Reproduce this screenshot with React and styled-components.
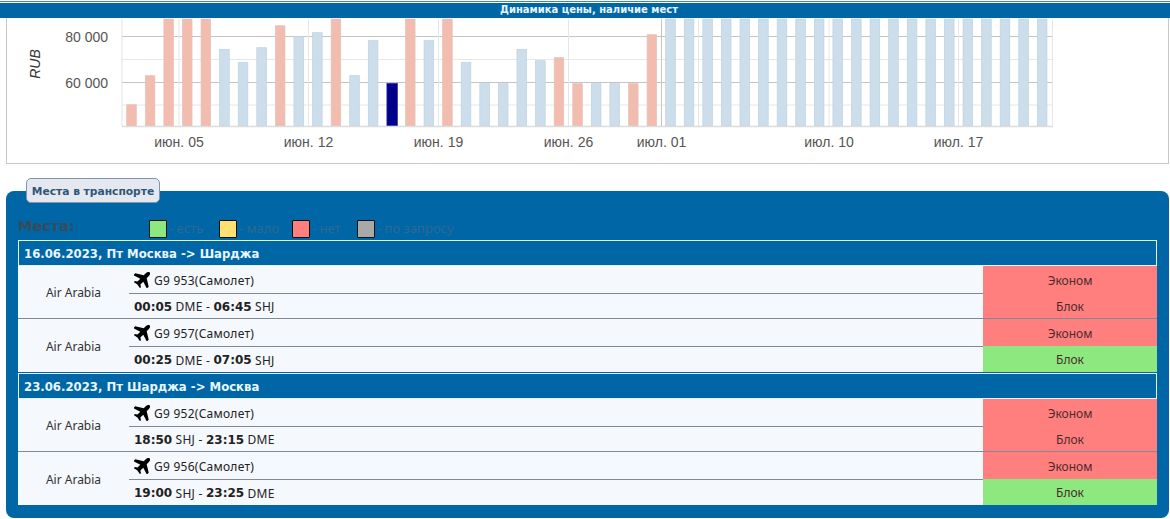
import React from "react";
import styled, { createGlobalStyle } from "styled-components";

const Global = createGlobalStyle`
  html, body { margin: 0; padding: 0; background: #fff; }
  body { font-family: "Noto Sans", Tahoma, sans-serif; font-size: 12px; color: #333; overflow: hidden; }
`;

const BOLD = `"DejaVu Sans", Tahoma, sans-serif`;

const Page = styled.div`
  width: 1170px;
  height: 519px;
  overflow: hidden;
  padding-top: 1px;
  box-sizing: border-box;
`;
const TopLine = styled.div`
  height: 1px;
  background: #3f87b3;
  margin-bottom: 1px;
`;
const TitleBar = styled.div`
  height: 15px;
  background: #0066a6;
  color: #e8f6ff;
  font-family: ${BOLD};
  font-size: 10px;
  font-weight: 700;
  line-height: 13px;
  text-align: center;
  padding-left: 8px;
`;
const ChartBox = styled.div`
  margin: 0 1px 0 6px;
  height: 146px;
  box-sizing: border-box;
  border: 1px solid #c8c8c8;
  border-top: none;
  background: #fff;
`;
const ChartSvg = styled.svg`
  display: block;
  width: 1161px;
  height: 145px;
`;
const AxisText = styled.text`
  font-family: "Liberation Sans", Arial, sans-serif;
  font-size: 14px;
  fill: #555;
`;
const AxisTitle = styled(AxisText)`
  font-style: italic;
  fill: #333;
`;
const Panel = styled.section`
  position: relative;
  margin: 27px 1px 0 6px;
  height: 327px;
  box-sizing: border-box;
  padding: 21px 12px 0;
  background: #0066a6;
  border-radius: 8px;
`;
const Tab = styled.div`
  position: absolute;
  left: 20px;
  top: -13px;
  width: 134px;
  height: 25px;
  box-sizing: border-box;
  border: 1px solid #7d97b0;
  border-radius: 5px;
  background: #e5e9ef;
  color: #2f567a;
  font-family: ${BOLD};
  font-weight: 700;
  font-size: 10.7px;
  line-height: 25px;
  text-align: center;
`;
const Legend = styled.div`
  display: flex;
  align-items: center;
  height: 28px;
  padding-top: 6px;
  box-sizing: border-box;
`;
const LegendTitle = styled.div`
  width: 131px;
  font-family: ${BOLD};
  font-size: 14.5px;
  font-weight: 700;
  color: #384b58;
  margin-top: -7px;
`;
const LegendItem = styled.div`
  display: flex;
  align-items: center;
  width: ${(p) => p.$width}px;
  color: #2d6a94;
  font-size: 13px;
  white-space: nowrap;
`;
const LegendLabel = styled.span`
  margin-top: -3px;
`;
const Swatch = styled.span`
  flex: none;
  width: 18px;
  height: 18px;
  box-sizing: border-box;
  border: 1px solid #111;
  background: ${(p) => p.$color};
  margin-right: 2px;
  border-radius: 1px;
`;
const Table = styled.div`
  width: 1139px;
`;
const SectionHead = styled.div`
  height: 26px;
  box-sizing: border-box;
  border: 1px solid #e4f2fa;
  padding-left: 5px;
  color: #e8f6ff;
  font-family: ${BOLD};
  font-size: 11.7px;
  font-weight: 700;
  line-height: 27px;
`;
const Row = styled.div`
  display: flex;
  height: ${(p) => p.$height}px;
  box-sizing: border-box;
  background: #f5f8fc;
  border-bottom: 1px solid ${(p) => (p.$last ? "#0066a6" : "#7f8a94")};
`;
const Airline = styled.div`
  width: 111px;
  padding-top: 1px;
  box-sizing: border-box;
  display: flex;
  align-items: center;
  justify-content: center;
  color: #333;
`;
const Flight = styled.div`
  width: 854px;
  display: flex;
  flex-direction: column;
`;
const FlightTop = styled.div`
  flex: none;
  height: 28px;
  display: flex;
  align-items: center;
  padding: 2px 0 0 5px;
  box-sizing: border-box;
  color: #222;
  letter-spacing: 0.25px;
  border-bottom: 1px solid #7f8a94;
`;
const FlightTimes = styled.div`
  flex: 1;
  display: flex;
  align-items: center;
  padding: 1px 0 0 5px;
  box-sizing: border-box;
  color: #222;
  letter-spacing: 0.25px;
`;
const PlaneSvg = styled.svg`
  flex: none;
  width: 16px;
  height: 16px;
  margin: -1px 4px 0 0;
`;
const Time = styled.b`
  font-family: ${BOLD};
  font-weight: 700;
  font-size: 12px;
  letter-spacing: 0;
  color: #222;
`;
const Classes = styled.div`
  width: 174px;
  display: flex;
  flex-direction: column;
`;
const ClassCell = styled.div`
  flex: 1;
  display: flex;
  align-items: center;
  justify-content: center;
  padding-top: 2px;
  box-sizing: border-box;
  background: ${(p) => p.$color};
  color: #4a2b2b;
`;

function Plane() {
  return (
    <PlaneSvg viewBox="-11 -7.5 18.5 18.5" aria-hidden="true">
      <g transform="rotate(-45)">
        <path
          fill="#000"
          d="M10 0C10 -1.7 8 -2.4 6 -2.4L2.8 -2.4L-2.5 -11L-5.5 -11L-2.8 -2.4L-7.5 -2.4L-9.2 -5L-10.8 -5L-10 0L-10.8 5L-9.2 5L-7.5 2.4L-2.8 2.4L6 2.4C8 2.4 10 1.7 10 0Z M-2.8 2.4L-5.5 11L-2.5 11L2.8 2.4Z"
        />
      </g>
    </PlaneSvg>
  );
}

const RED = "#ff7f7f";
const GREEN = "#8de880";
const PINK = ["#f2bcaf", "#e2c4bb"];
const BLUE = ["#ccdeeb", "#bfd1dc"];

const tops = [
  104.7, 75.7, 19, 19, 19, 49.3, 62.3, 47.7, 25.7, 36.3, 32.7, 19, 75.7, 40.7, 83.3, 19, 40.7, 19, 62.3, 83.7,
  83.7, 49.3, 60.7, 57.7, 83.7, 83.7, 83.7, 83.7, 34.7,
];
const pinkIdx = new Set([0, 1, 2, 3, 4, 8, 11, 15, 17, 23, 24, 27, 28]);
const bars = Array.from({ length: 50 }, (_, i) => ({
  x: 126.7 + 18.585 * i,
  top: i < tops.length ? tops[i] : 19,
  kind: i === 14 ? "navy" : pinkIdx.has(i) ? "pink" : "blue",
}));
const ticks = [
  [179, "июн. 05"],
  [308.5, "июн. 12"],
  [438.5, "июн. 19"],
  [568.5, "июн. 26"],
  [661.5, "июл. 01"],
  [829, "июл. 10"],
  [958.5, "июл. 17"],
];
const OX = 7;
const OY = 18;

function Chart() {
  return (
    <ChartSvg viewBox={`${OX} ${OY} 1161 145`}>
      {[59.5, 105].map((y) => (
        <line key={y} x1="122" x2="1053" y1={y} y2={y} stroke="#e6e6e6" />
      ))}
      {[36.5, 82.5].map((y) => (
        <line key={y} x1="122" x2="1053" y1={y} y2={y} stroke="#c4c4c4" />
      ))}
      {[179, 308.5, 438.5, 568.5, 698.5, 829, 958.5, 1052.5].map((x) => (
        <line key={x} x1={x} x2={x} y1="19" y2="126" stroke="#e6e6e6" />
      ))}
      <line x1="661.5" x2="661.5" y1="19" y2="126" stroke="#c4c4c4" />
      <line x1="122" x2="122" y1="19" y2="126" stroke="#e2e2e2" />
      {bars.map((b, i) => {
        const [fill, stroke] =
          b.kind === "navy" ? ["#00008b", "#33339f"] : b.kind === "pink" ? PINK : BLUE;
        return (
          <rect
            key={i}
            x={b.x}
            y={b.top}
            width={b.kind === "navy" ? 10.6 : 9.6}
            height={126 - b.top}
            fill={fill}
            stroke={stroke}
            strokeWidth="0.7"
          />
        );
      })}
      <line x1="122" x2="1053" y1="126.5" y2="126.5" stroke="#dcdcdc" strokeWidth="1.4" />
      <AxisText x="108" y="42" textAnchor="end">80 000</AxisText>
      <AxisText x="108" y="88" textAnchor="end">60 000</AxisText>
      <AxisTitle transform="translate(40 64) rotate(-90)" textAnchor="middle">RUB</AxisTitle>
      {ticks.map(([x, t]) => (
        <AxisText key={t} x={x} y="147" textAnchor="middle">{t}</AxisText>
      ))}
    </ChartSvg>
  );
}

const sections = [
  {
    head: "16.06.2023, Пт Москва -> Шарджа",
    rows: [
      { no: "G9 953", a: "00:05", af: "DME", b: "06:45", bf: "SHJ", c: [RED, RED] },
      { no: "G9 957", a: "00:25", af: "DME", b: "07:05", bf: "SHJ", c: [RED, GREEN] },
    ],
  },
  {
    head: "23.06.2023, Пт Шарджа -> Москва",
    rows: [
      { no: "G9 952", a: "18:50", af: "SHJ", b: "23:15", bf: "DME", c: [RED, RED] },
      { no: "G9 956", a: "19:00", af: "SHJ", b: "23:25", bf: "DME", c: [RED, GREEN] },
    ],
  },
];

const legend = [
  ["#8de880", "- есть", 70],
  ["#ffe070", "- мало", 73],
  ["#ff7f7f", "- нет", 65],
  ["#a9a9a9", "- по запросу", 100],
];

export default function App() {
  return (
    <Page>
      <Global />
      <TopLine />
      <TitleBar>Динамика цены, наличие мест</TitleBar>
      <ChartBox>
        <Chart />
      </ChartBox>
      <Panel>
        <Tab>Места в транспорте</Tab>
        <Legend>
          <LegendTitle>Места:</LegendTitle>
          {legend.map(([color, label, width]) => (
            <LegendItem key={label} $width={width}>
              <Swatch $color={color} />
              <LegendLabel>{label}</LegendLabel>
            </LegendItem>
          ))}
        </Legend>
        <Table>
          {sections.map((s) => (
            <div key={s.head}>
              <SectionHead>{s.head}</SectionHead>
              {s.rows.map((r, ri) => (
                <Row key={r.no} $height={ri === 0 ? 53 : 54} $last={ri === 1}>
                  <Airline>Air Arabia</Airline>
                  <Flight>
                    <FlightTop>
                      <Plane />
                      {r.no}(Самолет)
                    </FlightTop>
                    <FlightTimes>
                      <Time>{r.a}</Time>&nbsp;{r.af} -&nbsp;<Time>{r.b}</Time>&nbsp;{r.bf}
                    </FlightTimes>
                  </Flight>
                  <Classes>
                    <ClassCell $color={r.c[0]}>Эконом</ClassCell>
                    <ClassCell $color={r.c[1]}>Блок</ClassCell>
                  </Classes>
                </Row>
              ))}
            </div>
          ))}
        </Table>
      </Panel>
    </Page>
  );
}
